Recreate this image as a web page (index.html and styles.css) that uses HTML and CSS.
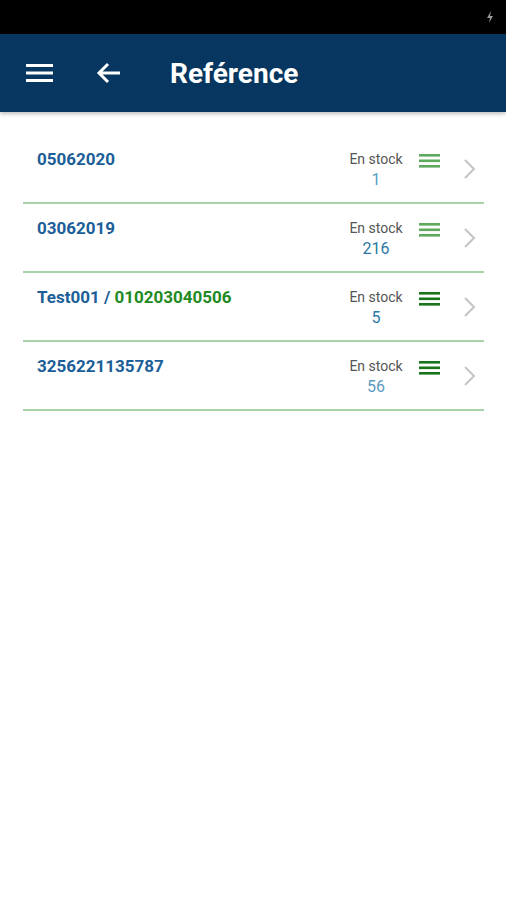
FILE: index.html
```html
<!DOCTYPE html>
<html lang="fr">
<head>
    <meta charset="UTF-8">
    <meta name="viewport" content="width=device-width, initial-scale=1.0">
    <title>Reférence</title>
    <link rel="stylesheet" href="styles.css">
</head>
<body>
    <div class="status-bar">
        <svg class="bolt" width="8" height="12" viewBox="0 0 8 12">
            <path d="M5 0 L1 7 H4 L3 12 L7 5 H4 Z" fill="#9a9a9a"/>
        </svg>
    </div>
    <header class="app-bar">
        <svg class="menu-icon" width="28" height="20" viewBox="0 0 28 20">
            <rect x="0" y="1" width="27" height="3" fill="#fff"/>
            <rect x="0" y="8.5" width="27" height="3" fill="#fff"/>
            <rect x="0" y="16" width="27" height="3" fill="#fff"/>
        </svg>
        <svg class="back-icon" width="26" height="24" viewBox="0 0 26 24">
            <path d="M24 12 H4 M12 3 L3 12 L12 21" stroke="#fff" stroke-width="3" fill="none"/>
        </svg>
        <h1 class="title">Reférence</h1>
    </header>

    <ul class="ref-list">
        <li class="ref-row">
            <div class="ref-name">05062020</div>
            <div class="stock">
                <span class="stock-label">En stock</span>
                <span class="stock-qty light">1</span>
            </div>
            <svg class="lines light" width="22" height="16" viewBox="0 0 22 16">
                <rect y="1" width="21" height="2.6" /><rect y="6.5" width="21" height="2.6" /><rect y="12" width="21" height="2.6" />
            </svg>
            <svg class="chevron" width="14" height="22" viewBox="0 0 14 22">
                <path d="M2 2 L11 11 L2 20" stroke="#c4c4c4" stroke-width="2" fill="none"/>
            </svg>
        </li>
        <li class="ref-row">
            <div class="ref-name">03062019</div>
            <div class="stock">
                <span class="stock-label">En stock</span>
                <span class="stock-qty">216</span>
            </div>
            <svg class="lines light" width="22" height="16" viewBox="0 0 22 16">
                <rect y="1" width="21" height="2.6" /><rect y="6.5" width="21" height="2.6" /><rect y="12" width="21" height="2.6" />
            </svg>
            <svg class="chevron" width="14" height="22" viewBox="0 0 14 22">
                <path d="M2 2 L11 11 L2 20" stroke="#c4c4c4" stroke-width="2" fill="none"/>
            </svg>
        </li>
        <li class="ref-row">
            <div class="ref-name">Test001 / <span class="ean">010203040506</span></div>
            <div class="stock">
                <span class="stock-label">En stock</span>
                <span class="stock-qty">5</span>
            </div>
            <svg class="lines" width="22" height="16" viewBox="0 0 22 16">
                <rect y="1" width="21" height="2.6" /><rect y="6.5" width="21" height="2.6" /><rect y="12" width="21" height="2.6" />
            </svg>
            <svg class="chevron" width="14" height="22" viewBox="0 0 14 22">
                <path d="M2 2 L11 11 L2 20" stroke="#c4c4c4" stroke-width="2" fill="none"/>
            </svg>
        </li>
        <li class="ref-row">
            <div class="ref-name">3256221135787</div>
            <div class="stock">
                <span class="stock-label">En stock</span>
                <span class="stock-qty light">56</span>
            </div>
            <svg class="lines" width="22" height="16" viewBox="0 0 22 16">
                <rect y="1" width="21" height="2.6" /><rect y="6.5" width="21" height="2.6" /><rect y="12" width="21" height="2.6" />
            </svg>
            <svg class="chevron" width="14" height="22" viewBox="0 0 14 22">
                <path d="M2 2 L11 11 L2 20" stroke="#c4c4c4" stroke-width="2" fill="none"/>
            </svg>
        </li>
    </ul>
</body>
</html>
```

FILE: styles.css
```css
body {
    margin: 0;
    background: #fff;
    font-family: Roboto, "Liberation Sans", sans-serif;
}

.status-bar {
    height: 34px;
    background: #000;
    display: flex;
    justify-content: flex-end;
    align-items: center;
    padding-right: 12px;
}

.app-bar {
    height: 78px;
    background: #073760;
    display: flex;
    align-items: center;
    padding-left: 26px;
    box-shadow: 0 2px 4px rgba(0, 0, 0, 0.25);
}

.back-icon {
    margin-left: 42px;
}

.title {
    margin: 0 0 0 48px;
    color: #fff;
    font-size: 28px;
    font-weight: 700;
}

.ref-list {
    list-style: none;
    margin: 23px 22px 0 23px;
    padding: 0;
}

.ref-row {
    height: 67px;
    border-bottom: 2px solid #a8d3a8;
    display: flex;
    align-items: flex-start;
    padding-left: 14px;
}

.ref-name {
    flex: 1;
    margin-top: 14px;
    font-size: 17px;
    font-weight: 700;
    color: #1b5e98;
}

.ean {
    color: #1f8a1f;
}

.stock {
    display: flex;
    flex-direction: column;
    align-items: center;
    margin-top: 16px;
    width: 60px;
}

.stock-label {
    font-size: 14px;
    color: #555;
    line-height: 17px;
}

.stock-qty {
    font-size: 16px;
    line-height: 20px;
    margin-top: 2px;
    color: #2a78a6;
}

.stock-qty.light {
    color: #5b9bc2;
}

.lines {
    margin: 18px 0 0 13px;
    fill: #1a751a;
}

.lines.light {
    fill: #5ea95e;
}

.chevron {
    margin: 23px 7px 0 22px;
}
```
